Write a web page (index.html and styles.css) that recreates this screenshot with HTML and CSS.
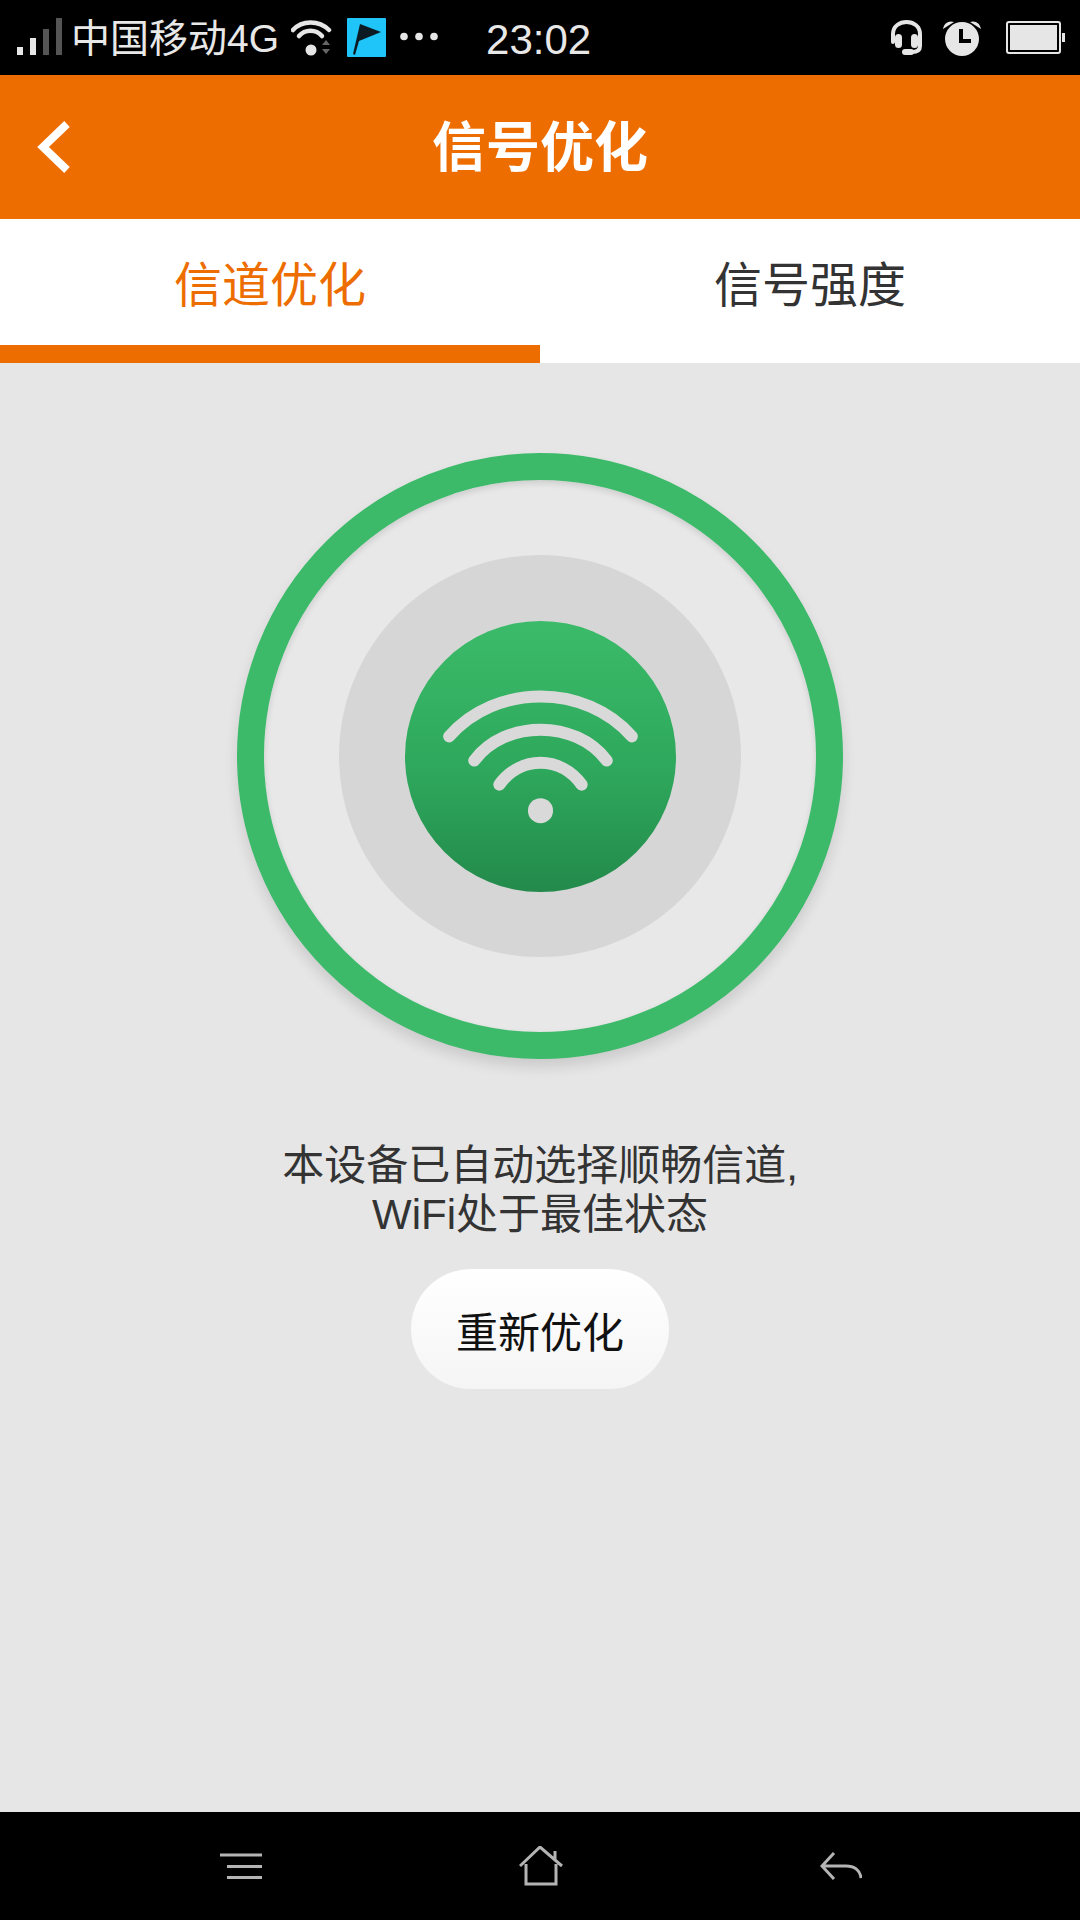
FILE: index.html
```html
<!DOCTYPE html>
<html lang="zh-CN">
<head>
<meta charset="utf-8">
<title>信号优化</title>
<link rel="stylesheet" href="styles.css">
</head>
<body>
<div class="screen">
  <div class="status">
    <svg class="sig" width="45" height="37" viewBox="0 0 45 37">
      <rect x="0" y="29" width="6" height="8" fill="#e6e6e6"/>
      <rect x="13" y="20" width="6" height="17" fill="#e6e6e6"/>
      <rect x="26" y="11" width="6" height="26" fill="#555"/>
      <rect x="39" y="0" width="6" height="37" fill="#555"/>
    </svg>
    <span class="carrier">中国移动4G</span>
    <svg class="wifi" width="41" height="36" viewBox="0 0 41 36">
      <g fill="none" stroke="#e6e6e6" stroke-width="4.5" stroke-linecap="round">
        <path d="M2 10 C11 0 28 0 38 10"/>
        <path d="M8 16 C14 9 25 9 31 16"/>
      </g>
      <circle cx="20" cy="30" r="5.5" fill="#e6e6e6"/>
      <path d="M31 25 L35 20 L39 25Z M31 29 H39 L35 34Z" fill="#666"/>
    </svg>
    <svg class="flag" width="39" height="39" viewBox="0 0 39 39">
      <rect width="39" height="39" rx="1" fill="#1fc4f8"/>
      <path d="M13 6 L34 14 L12 23 L8 37 L6 36Z" fill="#0c1a24"/>
    </svg>
    <svg class="dots" width="38" height="9" viewBox="0 0 38 9">
      <circle cx="4" cy="4.5" r="3.8" fill="#e6e6e6"/>
      <circle cx="19" cy="4.5" r="3.8" fill="#e6e6e6"/>
      <circle cx="34" cy="4.5" r="3.8" fill="#e6e6e6"/>
    </svg>
    <span class="time">23:02</span>
    <div class="status-right">
      <svg class="headset" width="33" height="37" viewBox="0 0 33 37">
        <path d="M3 23 V15 C3 -1 30 -1 30 15 V27 C30 31 27 33 22 33" fill="none" stroke="#e6e6e6" stroke-width="4" stroke-linecap="round"/>
        <rect x="5" y="15" width="7" height="14" rx="3.5" fill="#e6e6e6"/>
        <rect x="21" y="15" width="7" height="14" rx="3.5" fill="#e6e6e6"/>
        <rect x="12" y="30" width="12" height="6" rx="3" fill="#e6e6e6"/>
      </svg>
      <svg class="alarm" width="40" height="36" viewBox="0 0 40 36">
        <circle cx="20" cy="19" r="17" fill="#e6e6e6"/>
        <path d="M1 9 C2 3 7 0 12 2 Z M39 9 C38 3 33 0 28 2 Z" fill="#e6e6e6"/>
        <path d="M19 9 V21 H29" fill="none" stroke="#000" stroke-width="4"/>
      </svg>
      <svg width="59" height="33" viewBox="0 0 59 33">
        <rect x="1" y="1" width="53" height="31" rx="2" fill="#000" stroke="#e6e6e6" stroke-width="2"/>
        <rect x="4" y="4" width="47" height="25" fill="#e6e6e6"/>
        <rect x="56" y="12" width="3" height="9" fill="#e6e6e6"/>
      </svg>
    </div>
  </div>

  <header class="appbar">
    <svg class="chev" width="36" height="54" viewBox="0 0 36 54">
      <path d="M33 4 L9 27 L33 50" fill="none" stroke="#fff" stroke-width="8"/>
    </svg>
    <h1 class="title">信号优化</h1>
  </header>

  <nav class="tabs">
    <div class="tab active">信道优化</div>
    <div class="tab">信号强度</div>
  </nav>

  <main class="content">
    <div class="ring">
      <div class="halo">
        <div class="disc">
          <svg width="271" height="271" viewBox="0 0 270 270">
            <g fill="none" stroke="#d9d9d9" stroke-width="12" stroke-linecap="round">
              <path d="M44 115 C90 62 180 62 226 115"/>
              <path d="M69 139 C100 98 170 98 201 139"/>
              <path d="M94 163 C115 134 155 134 176 163"/>
            </g>
            <circle cx="135" cy="189" r="12.5" fill="#d9d9d9"/>
          </svg>
        </div>
      </div>
    </div>
    <p class="msg">本设备已自动选择顺畅信道,<br>WiFi处于最佳状态</p>
    <button class="retry">重新优化</button>
  </main>

  <footer class="navbar">
    <svg width="43" height="26" viewBox="0 0 43 26">
      <path d="M1 2 H43 M8 13.5 H43 M8 24.5 H43" fill="none" stroke="#b4b4b4" stroke-width="3"/>
    </svg>
    <svg width="44" height="40" viewBox="0 0 44 40">
      <path d="M1 20 L21 1 L43 20 M36 5 V13 M7 18 V38 H37 V18" fill="none" stroke="#b4b4b4" stroke-width="3"/>
    </svg>
    <svg width="42" height="28" viewBox="0 0 42 28">
      <path d="M14 1 L2 14 L14 27 M2 14 H26 C34 14 40 18 41 26" fill="none" stroke="#b4b4b4" stroke-width="3"/>
    </svg>
  </footer>
</div>
</body>
</html>
```
FILE: styles.css
```css
* { box-sizing: border-box; }
html, body { margin: 0; padding: 0; }
body {
  width: 1080px;
  height: 1920px;
  overflow: hidden;
  font-family: "Liberation Sans", "Noto Sans CJK SC", sans-serif;
}
.screen {
  width: 1080px;
  height: 1920px;
  display: flex;
  flex-direction: column;
  background: #e6e6e6;
}
.status {
  height: 75px;
  flex: none;
  background: #000;
  color: #e8e8e8;
  display: flex;
  align-items: center;
  padding: 0 15px 0 17px;
}
.sig { margin-bottom: 2px; }
.carrier { font-size: 39px; margin-left: 9px; white-space: nowrap; line-height: 71px; padding-top: 2px; }
.wifi { margin-left: 12px; }
.flag { margin-left: 15px; }
.dots { margin-left: 14px; margin-bottom: 3px; }
.time { font-size: 42px; margin-left: 48px; line-height: 69px; padding-top: 4px; }
.status-right {
  margin-left: auto;
  display: flex;
  align-items: center;
}
.headset { margin-right: 19px; }
.alarm { margin-right: 24px; }
.appbar {
  height: 144px;
  flex: none;
  background: #ed6d00;
  display: flex;
  align-items: center;
  justify-content: center;
  position: relative;
  padding-bottom: 7px;
}
.chev { position: absolute; left: 34px; top: 45px; }
.title { margin: 0; color: #fff; font-size: 54px; font-weight: 700; }
.tabs {
  height: 144px;
  flex: none;
  display: flex;
  background: #fff;
}
.tab {
  flex: 1;
  display: flex;
  align-items: center;
  justify-content: center;
  font-size: 48px;
  color: #333;
  border-bottom: 18px solid transparent;
  padding-bottom: 2px;
}
.tab.active { color: #ed6d00; border-bottom-color: #ed6d00; }
.content {
  flex: 1;
  display: flex;
  flex-direction: column;
  align-items: center;
  padding-top: 90px;
}
.ring {
  width: 606px;
  height: 606px;
  border-radius: 50%;
  border: 27px solid #3cba6a;
  display: flex;
  align-items: center;
  justify-content: center;
  background: #e8e8e8;
  box-shadow: 0 8px 14px rgba(0,0,0,.12), inset 0 3px 6px rgba(0,0,0,.12);
}
.halo {
  width: 402px;
  height: 402px;
  flex: none;
  border-radius: 50%;
  background: #d6d6d6;
  display: flex;
  align-items: center;
  justify-content: center;
}
.disc {
  width: 271px;
  height: 271px;
  flex: none;
  margin-left: 1px;
  border-radius: 50%;
  background: linear-gradient(#3bbb69 0%, #2ea85c 55%, #238a4b 100%);
}
.disc svg { display: block; }
.msg {
  margin: 82px 0 0;
  font-size: 42px;
  line-height: 49px;
  text-align: center;
  color: #333;
}
.retry {
  margin-top: 30px;
  width: 258px;
  height: 120px;
  border: 0;
  border-radius: 60px;
  background: linear-gradient(#fff, #f5f5f5);
  font: inherit;
  font-size: 42px;
  color: #111;
}
.navbar {
  height: 108px;
  flex: none;
  background: #000;
  display: flex;
  align-items: center;
  padding: 0 218px 0 219px;
  justify-content: space-between;
}
```
